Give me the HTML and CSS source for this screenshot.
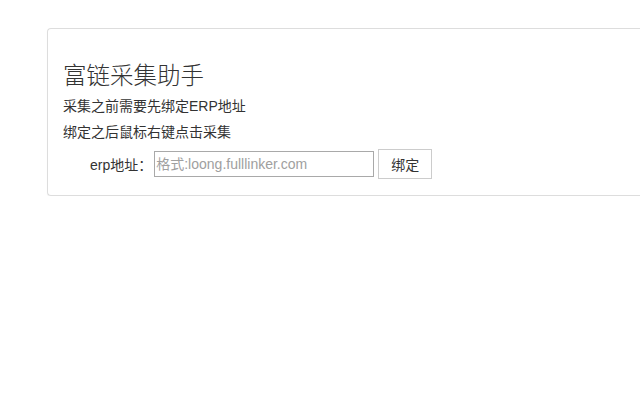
FILE: index.html
```html
<!DOCTYPE html>
<html lang="zh-CN">
<head>
<meta charset="utf-8">
<title>富链采集助手</title>
<link rel="stylesheet" href="styles.css">
</head>
<body>
<div class="page">
  <div class="card">
    <h3 class="title">富链采集助手</h3>
    <p class="line">采集之前需要先绑定<span class="latin">ERP</span>地址</p>
    <p class="line">绑定之后鼠标右键点击采集</p>
    <div class="form-row">
      <label class="label" for="erp"><span class="latin">erp</span>地址：</label>
      <input id="erp" class="input" type="text" placeholder="格式:loong.fulllinker.com">
      <button class="btn" type="button">绑定</button>
    </div>
  </div>
</div>
</body>
</html>
```

FILE: styles.css
```css
html, body {
  margin: 0;
  padding: 0;
  background: #fff;
}
body {
  font-family: "Liberation Sans", "Noto Sans CJK SC", sans-serif;
  font-size: 14px;
  color: #333;
}
.page {
  padding: 28px 0 0 47px;
}
.card {
  border: 1px solid #ddd;
  border-right: none;
  border-radius: 4px 0 0 4px;
  padding: 0 15px 16px 15px;
  box-shadow: 0 1px 1px rgba(0,0,0,0.05);
}
.title {
  margin: 30px 0 7px 0;
  font-size: 23.5px;
  font-weight: 300;
  line-height: 30px;
  color: #333;
  font-family: "Noto Sans CJK SC", sans-serif;
}
.line {
  margin: 0 0 6px 0;
  line-height: 20px;
}
.form-row {
  display: flex;
  align-items: center;
  margin-top: 7px;
  padding-left: 27px;
}
.label {
  margin-right: 2px;
}
.input {
  width: 220px;
  height: 26px;
  box-sizing: border-box;
  border: 1px solid #a9a9a9;
  padding: 0 1px;
  font-size: 14px;
  font-family: "Liberation Sans", "Noto Sans CJK SC", sans-serif;
  color: #333;
  margin: 0;
}
.input::placeholder {
  color: #a0a0a0;
}
.btn {
  margin-left: 4px;
  width: 54px;
  height: 30px;
  border: 1px solid #ccc;
  background: #fff;
  border-radius: 0;
  font-size: 14px;
  color: #333;
  font-family: "Noto Sans CJK SC", sans-serif;
  padding: 0;
}
```
